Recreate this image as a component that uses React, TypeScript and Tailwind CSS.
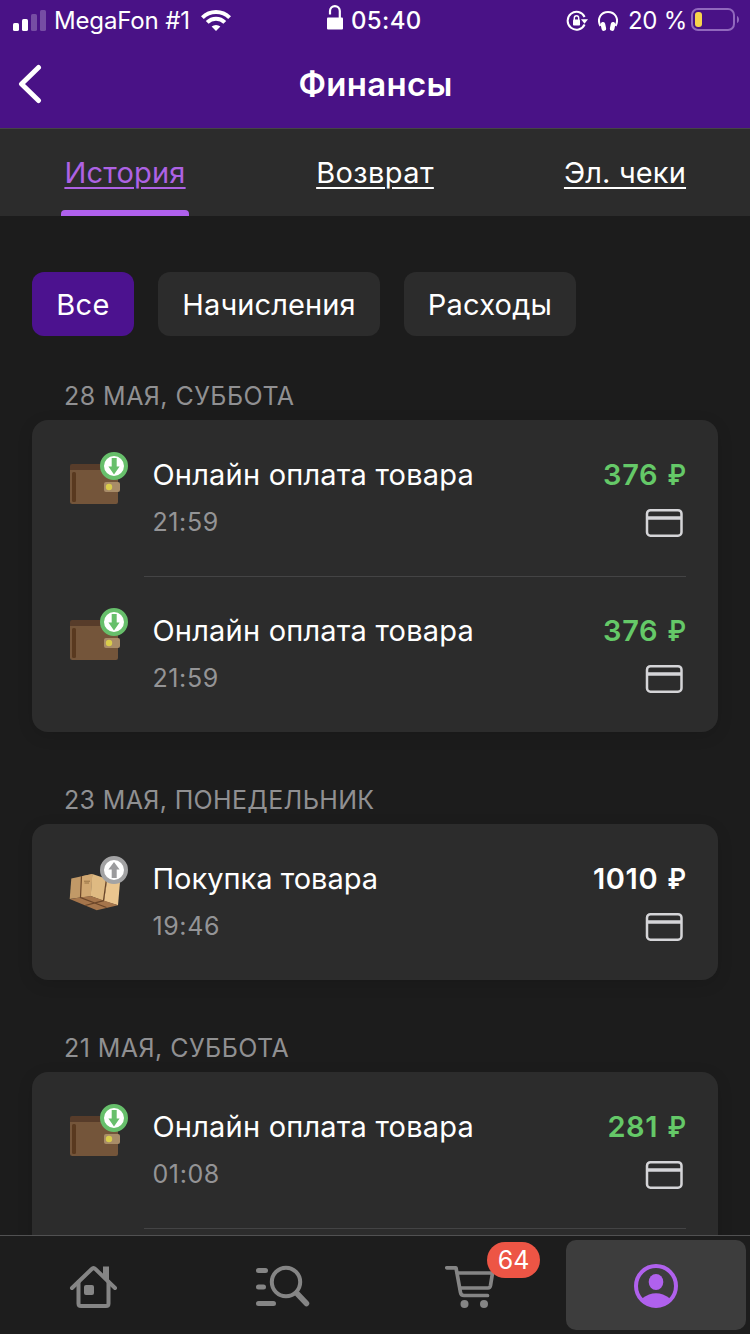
import React from "react";

type Kind = "income" | "purchase";
type Operation = { title: string; time: string; amount: string; kind: Kind; tracking: string };
type Day = { label: string; tracking: string; items: Operation[] };

const days: Day[] = [
  {
    label: "28 МАЯ, СУББОТА",
    tracking: "tracking-[0.45px]",
    items: [
      { title: "Онлайн оплата товара", time: "21:59", amount: "376", kind: "income", tracking: "tracking-[0.2px]" },
      { title: "Онлайн оплата товара", time: "21:59", amount: "376", kind: "income", tracking: "tracking-[0.2px]" },
    ],
  },
  {
    label: "23 МАЯ, ПОНЕДЕЛЬНИК",
    tracking: "tracking-[0.35px]",
    items: [{ title: "Покупка товара", time: "19:46", amount: "1010", kind: "purchase", tracking: "tracking-[0px]" }],
  },
  {
    label: "21 МАЯ, СУББОТА",
    tracking: "tracking-[0.45px]",
    items: [
      { title: "Онлайн оплата товара", time: "01:08", amount: "281", kind: "income", tracking: "tracking-[0.2px]" },
      { title: "Онлайн оплата товара", time: "01:08", amount: "281", kind: "income", tracking: "tracking-[0.2px]" },
    ],
  },
];

function StatusBar() {
  return (
    <div className="flex h-[41px] shrink-0 items-center text-[24px] leading-[41px]">
      <div className="flex w-[326px] items-center pl-[13px]">
        <svg width="34" height="22" viewBox="0 0 34 22" fill="#fff">
          <rect x="0" y="13" width="6" height="8" rx="1.6" />
          <rect x="9" y="9" width="6" height="12" rx="1.6" />
          <rect x="18" y="4" width="6" height="17" rx="1.6" opacity=".25" />
          <rect x="27" y="0" width="6" height="21" rx="1.6" opacity=".25" />
        </svg>
        <span className="ml-[7px] w-[147px] whitespace-nowrap tracking-[-0.15px]">MegaFon #1</span>
        <svg width="30" height="23" viewBox="0 0 30 23" fill="none" stroke="#fff" strokeWidth="4">
          <path d="M1.4 8.6 A19.3 19.3 0 0 1 28.6 8.6" />
          <path d="M6.2 13.4 A12.4 12.4 0 0 1 23.8 13.4" />
          <path d="M10.6 17.6 A6.6 6.6 0 0 1 19.4 17.6 L15 22 Z" fill="#fff" stroke="none" />
        </svg>
      </div>
      <div className="flex w-[240px] items-center">
        <svg width="18" height="26" viewBox="0 0 18 26" className="-mt-[7px]">
          <rect x="1" y="13.500" width="16" height="12" rx="1" fill="#fff" />
          <path d="M4 10.500 V7 A4.900 4.900 0 0 1 13.800 7 V14" fill="none" stroke="#fff" strokeWidth="2.200" />
        </svg>
        <span className="ml-[7px] whitespace-nowrap font-medium tracking-[0.35px]">05:40</span>
      </div>
      <svg width="22" height="22" viewBox="0 0 22 22" fill="none">
        <path d="M18.600 14.500 A8.900 8.900 0 1 1 18.600 7" stroke="#fff" strokeWidth="2" />
        <path d="M15 9.300 H22 L18.500 13.800 Z" fill="#fff" />
        <rect x="7" y="9.500" width="7" height="6" rx=".8" fill="#fff" />
        <path d="M8.300 10 V8 A2.200 2.200 0 0 1 12.700 8 V10" stroke="#fff" strokeWidth="1.400" />
      </svg>
      <svg width="20" height="22" viewBox="0 0 20 22" className="ml-[10px]" fill="none">
        <path d="M2.400 16 C-1.600 8 3.500 2 10 2 C16.500 2 21.600 8 17.600 16" stroke="#fff" strokeWidth="2" />
        <rect x="3" y="12" width="4.600" height="9" rx="2.200" transform="rotate(-12 5 16)" fill="#fff" />
        <rect x="12.400" y="12" width="4.600" height="9" rx="2.200" transform="rotate(12 15 16)" fill="#fff" />
      </svg>
      <span className="ml-[10px] w-[63px] whitespace-nowrap tracking-[-0.3px]">20 %</span>
      <svg width="50" height="24" viewBox="0 0 50 24" className="-mt-[2px]">
        <rect x="1" y="1" width="42" height="21" rx="6" fill="none" stroke="#9168bd" strokeWidth="2" />
        <rect x="4" y="4" width="7" height="15" rx="3" fill="#f7d44c" />
        <path d="M46 8 C48.700 9 48.700 14 46 15 Z" fill="#9168bd" />
      </svg>
    </div>
  );
}

function WalletIcon() {
  return (
    <svg width="60" height="54" viewBox="0 0 60 54">
      <path d="M2 14 Q2 12 4 12 H44 V24 H2 Z" fill="#573c2a" />
      <path d="M2 18 H48 Q50 18 50 20 V50 Q50 52 48 52 H4.500 Q2 52 2 49.500 Z" fill="#74553a" />
      <rect x="4" y="20" width="4" height="30" rx="1.500" fill="#59391f" />
      <rect x="36" y="30" width="16" height="10" rx="2" fill="#a88c68" />
      <circle cx="41" cy="35" r="3.200" fill="#d9cd4b" />
      <circle cx="46" cy="14" r="12" fill="#fff" stroke="#67bf6b" strokeWidth="4" />
      <path d="M43.700 6 H48.700 V14.500 H51.600 L46 22.500 L40.400 14.500 H43.700 Z" fill="#67bf6b" />
    </svg>
  );
}

function BoxIcon() {
  return (
    <svg width="60" height="56" viewBox="0 0 60 56">
      <path d="M3.300 22.500 L24.300 18 L22.700 40 L1.700 43 Z" fill="#c19967" />
      <path d="M13.500 20.300 L24.300 18 L22.700 40 L12.500 41.500 Z" fill="#d1a872" />
      <path d="M24.300 18 L39.300 23 L36 45 L22.700 40 Z" fill="#dfba82" />
      <path d="M39.300 23 L52 26.300 L50 49.300 L36 45 Z" fill="#ebc68f" />
      <path d="M1.700 43 L22.700 40 L50 49.300 L28.700 54.300 Z" fill="#a5754b" />
      <path d="M13.500 20 L12.500 41.500 L38.500 51.500 M38.500 22.500 L35.500 44.700 L17 49.500" fill="none" stroke="#6b4629" strokeWidth="1.200" />
      <path d="M16 25.200 h6 M16.500 27 h4.500" stroke="#8e6b40" strokeWidth=".9" />
      <circle cx="46" cy="14" r="12" fill="#fff" stroke="#a3a3a4" strokeWidth="4" />
      <path d="M43.700 22 H48.700 V13.500 H51.600 L46 6 L40.400 13.500 H43.700 Z" fill="#9b9b9d" />
    </svg>
  );
}

function CardIcon() {
  return (
    <svg width="38" height="29" viewBox="0 0 38 29" fill="none" stroke="#d5d5d8">
      <rect x="2" y="2.200" width="34.500" height="25.500" rx="3.500" strokeWidth="2.500" />
      <path d="M2 9.900 H36.500" strokeWidth="3.500" />
    </svg>
  );
}

function OperationRow({ item, first }: { item: Operation; first: boolean }) {
  return (
    <div className="flex h-[156px] pl-9 pr-8">
      <div className="w-[76px] shrink-0 pt-8">{item.kind === "income" ? <WalletIcon /> : <BoxIcon />}</div>
      <div className={`flex flex-1 justify-between border-t ${first ? "border-transparent" : "border-[#444445]"}`}>
        <div className="pl-[8.5px] pt-[33px]">
          <div className={`h-[42px] whitespace-nowrap text-[29px] leading-[42px] text-white ${item.tracking}`}>{item.title}</div>
          <div className="mt-[9px] text-[25px] leading-[34px] tracking-[0.6px] text-[#949496]">{item.time}</div>
        </div>
        <div className="flex flex-col items-end pt-[33px]">
          <div className={`whitespace-nowrap text-[29px] font-semibold leading-[42px] ${item.kind === "income" ? "text-[#65c968]" : "text-white"}`}>
            <span className="tracking-[0.6px]">{item.amount}</span>
            <span className="tracking-[-0.6px]"> </span>
            <span className="inline-block origin-right scale-x-[0.88]">₽</span>
          </div>
          <div className="mr-[3px] mt-[12px]"><CardIcon /></div>
        </div>
      </div>
    </div>
  );
}

function BottomNav() {
  return (
    <nav className="flex h-[99px] shrink-0 border-t border-[#515152] bg-[#1d1d1d] text-[#858585]">
      <div className="w-[188px] pl-[69px] pt-[29px]">
        <svg width="50" height="44" viewBox="0 0 50 44" fill="none" stroke="currentColor" strokeWidth="4" strokeLinecap="round" strokeLinejoin="round">
          <path d="M3 23 L22.500 4.200 Q24.500 2.200 26.500 4.200 L46 23" />
          <path d="M9.500 17 V38.500 Q9.500 41 12 41 H37 Q39.500 41 39.500 38.500 V17" />
          <path d="M34 1.500 H40 V18 L34 12 Z" fill="currentColor" stroke="none" />
          <rect x="15" y="20" width="10" height="10" rx="2" fill="currentColor" stroke="none" />
        </svg>
      </div>
      <div className="w-[188px] pl-[67px] pt-[29px]">
        <svg width="56" height="44" viewBox="0 0 56 44" fill="none" stroke="currentColor" strokeLinecap="round">
          <path d="M3.500 5.500 H10.500 M3.500 22 H8.500 M3.500 38.500 H18.500" strokeWidth="5" />
          <circle cx="31" cy="17" r="14.200" strokeWidth="4" />
          <path d="M42.500 29 L51.500 38.500" strokeWidth="5.500" />
        </svg>
      </div>
      <div className="relative w-[190px] pl-[69px] pt-[29px]">
        <svg width="52" height="44" viewBox="0 0 52 44" fill="none" stroke="currentColor" strokeWidth="3.700" strokeLinecap="round" strokeLinejoin="round">
          <path d="M1.800 2.800 H11 L15.500 27.500 Q16 30.500 19 30.500 H42.500" />
          <path d="M12.500 8 H47.500 L45.500 20.500 Q45 23 43 23 H15" />
          <circle cx="19.500" cy="39" r="4" fill="currentColor" stroke="none" />
          <circle cx="39" cy="39" r="4" fill="currentColor" stroke="none" />
        </svg>
        <div className="absolute left-[111px] top-[6px] h-9 w-[53px] rounded-full bg-[#ed5545] text-center text-[25px] leading-9 text-white">64</div>
      </div>
      <div className="mt-1 flex h-[90px] w-[180px] items-center justify-center rounded-[10px] bg-[#3d3d3d]">
        <svg width="44" height="44" viewBox="0 0 44 44" className="mt-[2px]" fill="#b061ed">
          <circle cx="22" cy="22" r="20" fill="none" stroke="#b061ed" strokeWidth="4" />
          <ellipse cx="22" cy="18" rx="7.300" ry="8" />
          <path d="M8 34.500 Q22 24 36 34.500 Q30 42.500 22 42.500 Q14 42.500 8 34.500 Z" />
        </svg>
      </div>
    </nav>
  );
}

export default function App() {
  return (
    <div className="flex h-[1334px] w-[750px] flex-col overflow-hidden bg-[#1c1c1c] font-['Inter','Noto_Sans',sans-serif] text-white">
      <header className="flex h-32 shrink-0 flex-col bg-[#491286]">
        <StatusBar />
        <div className="grid h-[86px] grid-cols-[100px_1fr_100px] items-center">
          <svg width="24" height="40" viewBox="0 0 24 40" className="ml-[18px]" fill="none" stroke="#fff" strokeWidth="5" strokeLinecap="round" strokeLinejoin="round">
            <path d="M20.500 3.500 L3.500 20 L20.500 36.500" />
          </svg>
          <h1 className="pl-px text-center text-[33px] font-semibold leading-[44px] tracking-[0.3px]">Финансы</h1>
        </div>
      </header>
      <nav className="grid h-[88px] shrink-0 grid-cols-3 border-t border-[#454446] bg-[#2c2c2c] text-[29px] leading-[88px]">
        <div className="flex flex-col items-center text-[#ae62e4]">
          <div className="h-[81px] tracking-[0.2px] underline decoration-2 underline-offset-[4px]">История</div>
          <div className="h-[6px] w-32 rounded-t bg-[#b061ed]" />
        </div>
        <div className="text-center tracking-[0.4px] underline decoration-2 underline-offset-[4px]">Возврат</div>
        <div className="text-center tracking-[0.15px] underline decoration-2 underline-offset-[4px]">Эл. чеки</div>
      </nav>
      <main className="flex min-h-0 flex-1 flex-col overflow-hidden px-8 pt-14">
        <div className="flex shrink-0 gap-6 text-center text-[29px] leading-[65px]">
          <div className="h-16 w-[102px] rounded-xl bg-[#4c128f] tracking-[0.3px]">Все</div>
          <div className="h-16 w-[222px] rounded-xl bg-[#2c2c2c] tracking-[0.1px]">Начисления</div>
          <div className="h-16 w-[172px] rounded-xl bg-[#2c2c2c] tracking-[0.2px]">Расходы</div>
        </div>
        {days.map((day, i) => (
          <section key={day.label} className={`shrink-0 ${i === 0 ? "pt-9" : "pt-11"}`}>
            <h2 className={`h-12 pl-8 text-[25px] leading-[49px] text-[#909092] ${day.tracking}`}>{day.label}</h2>
            <div className="rounded-2xl bg-[#2c2c2c] shadow-[0_4px_16px_rgba(0,0,0,0.12)]">
              {day.items.map((item, index) => (
                <OperationRow key={index} item={item} first={index === 0} />
              ))}
            </div>
          </section>
        ))}
      </main>
      <BottomNav />
    </div>
  );
}
